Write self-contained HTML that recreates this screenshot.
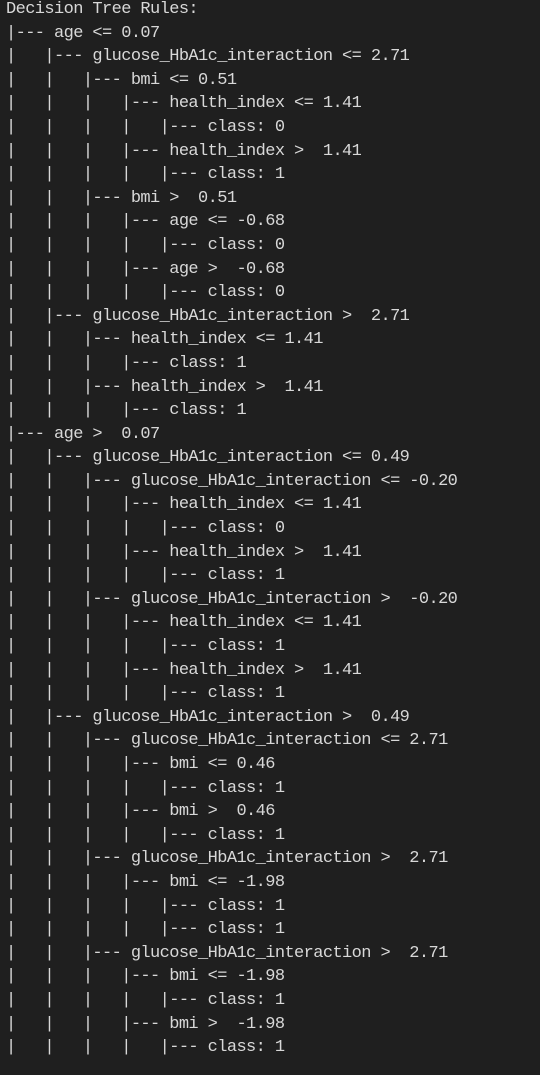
<!DOCTYPE html>
<html><head><meta charset="utf-8"><style>
html,body{margin:0;padding:0;background:#1f1f1f;width:540px;height:1075px;overflow:hidden}
pre{position:absolute;left:6px;top:-2px;margin:0;font-family:"Liberation Mono","DejaVu Sans Mono",monospace;font-size:17px;letter-spacing:-0.6px;line-height:23.6px;color:#d8d8d8;white-space:pre}
</style></head><body><pre>Decision Tree Rules:
|--- age &lt;= 0.07
|   |--- glucose_HbA1c_interaction &lt;= 2.71
|   |   |--- bmi &lt;= 0.51
|   |   |   |--- health_index &lt;= 1.41
|   |   |   |   |--- class: 0
|   |   |   |--- health_index &gt;  1.41
|   |   |   |   |--- class: 1
|   |   |--- bmi &gt;  0.51
|   |   |   |--- age &lt;= -0.68
|   |   |   |   |--- class: 0
|   |   |   |--- age &gt;  -0.68
|   |   |   |   |--- class: 0
|   |--- glucose_HbA1c_interaction &gt;  2.71
|   |   |--- health_index &lt;= 1.41
|   |   |   |--- class: 1
|   |   |--- health_index &gt;  1.41
|   |   |   |--- class: 1
|--- age &gt;  0.07
|   |--- glucose_HbA1c_interaction &lt;= 0.49
|   |   |--- glucose_HbA1c_interaction &lt;= -0.20
|   |   |   |--- health_index &lt;= 1.41
|   |   |   |   |--- class: 0
|   |   |   |--- health_index &gt;  1.41
|   |   |   |   |--- class: 1
|   |   |--- glucose_HbA1c_interaction &gt;  -0.20
|   |   |   |--- health_index &lt;= 1.41
|   |   |   |   |--- class: 1
|   |   |   |--- health_index &gt;  1.41
|   |   |   |   |--- class: 1
|   |--- glucose_HbA1c_interaction &gt;  0.49
|   |   |--- glucose_HbA1c_interaction &lt;= 2.71
|   |   |   |--- bmi &lt;= 0.46
|   |   |   |   |--- class: 1
|   |   |   |--- bmi &gt;  0.46
|   |   |   |   |--- class: 1
|   |   |--- glucose_HbA1c_interaction &gt;  2.71
|   |   |   |--- bmi &lt;= -1.98
|   |   |   |   |--- class: 1
|   |   |   |   |--- class: 1
|   |   |--- glucose_HbA1c_interaction &gt;  2.71
|   |   |   |--- bmi &lt;= -1.98
|   |   |   |   |--- class: 1
|   |   |   |--- bmi &gt;  -1.98
|   |   |   |   |--- class: 1</pre></body></html>
